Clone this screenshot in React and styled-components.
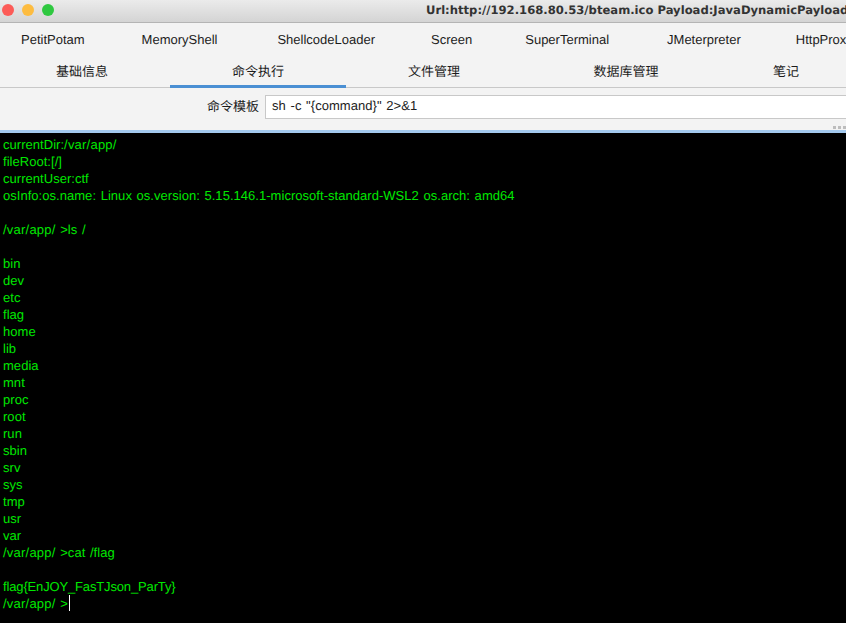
import React from 'react'
import styled, { createGlobalStyle } from 'styled-components'

const GlobalStyle = createGlobalStyle`
  html, body {
    margin: 0;
    padding: 0;
    height: 100%;
    background: #000000;
  }
  body {
    font-family: "Liberation Sans", "Noto Sans CJK SC", sans-serif;
    font-size: 13px;
    text-rendering: geometricPrecision;
    overflow: hidden;
  }
`

const Window = styled.div`
  width: 846px;
  height: 623px;
  display: flex;
  flex-direction: column;
  overflow: hidden;
`
const TitleBar = styled.div`
  flex: none;
  height: 19px;
  padding-bottom: 3px;
  display: flex;
  align-items: center;
  background: linear-gradient(#ebebeb, #d4d4d4);
  border-bottom: 1px solid #b4b4b4;
  white-space: nowrap;
`
const Lights = styled.div`
  display: flex;
  gap: 8px;
  margin-left: 2px;
`
const Light = styled.span`
  width: 12px;
  height: 12px;
  border-radius: 50%;
  background: ${props => props.$color};
`
const Title = styled.div`
  margin-left: 372px;
  font-family: "DejaVu Sans", sans-serif;
  font-weight: bold;
  font-size: 11.6px;
  color: #333333;
`
const PluginTabs = styled.div`
  flex: none;
  height: 32px;
  display: flex;
  align-items: center;
  background: #f3f3f3;
  white-space: nowrap;
  color: #1c1c1c;
`
const PluginTab = styled.div`
  flex: none;
  margin-left: ${props => props.$gap}px;
`
const MainTabs = styled.div`
  flex: none;
  height: 32px;
  margin-left: -6px;
  display: flex;
  background: #f3f3f3;
  border-bottom: 1px solid #c8c8c8;
  color: #1c1c1c;
`
const MainTab = styled.div`
  flex: none;
  width: ${props => props.$width}px;
  margin-bottom: -1px;
  display: flex;
  align-items: center;
  justify-content: center;
  border-bottom: 3px solid ${props => (props.$active ? '#4a8fd3' : 'transparent')};
  box-sizing: border-box;
`
const TemplateRow = styled.div`
  flex: none;
  height: 42px;
  display: flex;
  align-items: flex-start;
  background: #f3f3f3;
  position: relative;
`
const TemplateLabel = styled.label`
  margin: 10px 6px 0 207px;
  line-height: 17px;
  color: #1c1c1c;
  white-space: nowrap;
`
const TemplateInput = styled.div`
  flex: 1;
  height: 22px;
  margin-top: 7px;
  padding-left: 6px;
  margin-right: -4px;
  background: #ffffff;
  border: 1px solid #c8c8c8;
  line-height: 20px;
  color: #1c1c1c;
  letter-spacing: 0.05px;
  word-spacing: 1px;
`
const Grip = styled.div`
  position: absolute;
  right: 0;
  bottom: 1px;
  display: flex;
  gap: 2px;
`
const GripDot = styled.span`
  width: 3px;
  height: 3px;
  background: #bdbdbd;
`
const Divider = styled.div`
  flex: none;
  height: 3px;
  background: #a3c9ee;
`
const Terminal = styled.pre`
  flex: 1;
  margin: 0;
  padding: 3px 3px 0;
  background: #000000;
  color: #00e800;
  font-family: "Liberation Sans", sans-serif;
  font-size: 13px;
  line-height: 17px;
  letter-spacing: 0.035px;
  word-spacing: 1px;
  white-space: pre;
`
const Path = styled.span`
  letter-spacing: 0.22px;
`
const Flag = styled.span`
  letter-spacing: -0.15px;
`
const Caret = styled.span`
  display: inline-block;
  width: 1px;
  height: 16px;
  margin-left: 1px;
  vertical-align: -3px;
  background: #ffffff;
`

const plugins = [
  { name: 'PetitPotam', gap: 21 },
  { name: 'MemoryShell', gap: 57 },
  { name: 'ShellcodeLoader', gap: 60 },
  { name: 'Screen', gap: 56 },
  { name: 'SuperTerminal', gap: 53 },
  { name: 'JMeterpreter', gap: 58 },
  { name: 'HttpProxy', gap: 55 },
]

const tabs = [
  { name: '基础信息', width: 176 },
  { name: '命令执行', width: 176, active: true },
  { name: '文件管理', width: 176 },
  { name: '数据库管理', width: 208 },
  { name: '笔记', width: 112 },
]

const dirs = `bin
dev
etc
flag
home
lib
media
mnt
proc
root
run
sbin
srv
sys
tmp
usr
var
`

const App = () => {
  return (
    <Window>
      <GlobalStyle />
      <TitleBar>
        <Lights>
          <Light $color="#fc5b57" />
          <Light $color="#fdbc40" />
          <Light $color="#2fc840" />
        </Lights>
        <Title>Url:http://192.168.80.53/bteam.ico Payload:JavaDynamicPayload</Title>
      </TitleBar>
      <PluginTabs>
        {plugins.map(item => (
          <PluginTab key={item.name} $gap={item.gap}>{item.name}</PluginTab>
        ))}
      </PluginTabs>
      <MainTabs>
        {tabs.map(item => (
          <MainTab key={item.name} $width={item.width} $active={item.active}>{item.name}</MainTab>
        ))}
      </MainTabs>
      <TemplateRow>
        <TemplateLabel>命令模板</TemplateLabel>
        <TemplateInput>sh -c "{'{command}'}" 2&gt;&amp;1</TemplateInput>
        <Grip>
          <GripDot />
          <GripDot />
          <GripDot />
        </Grip>
      </TemplateRow>
      <Divider />
      <Terminal>
        currentDir:<Path>/var/app/</Path>{'\n'}
        fileRoot:[/]{'\n'}
        currentUser:ctf{'\n'}
        osInfo:os.name: Linux os.version: 5.15.146.1-microsoft-standard-WSL2 os.arch: amd64{'\n'}
        {'\n'}
        <Path>/var/app/</Path> &gt;ls /{'\n'}
        {'\n'}
        {dirs}
        <Path>/var/app/</Path> &gt;cat /flag{'\n'}
        {'\n'}
        <Flag>flag{'{EnJOY_FasTJson_ParTy}'}</Flag>{'\n'}
        <Path>/var/app/</Path> &gt;<Caret />
      </Terminal>
    </Window>
  )
}

export default App
